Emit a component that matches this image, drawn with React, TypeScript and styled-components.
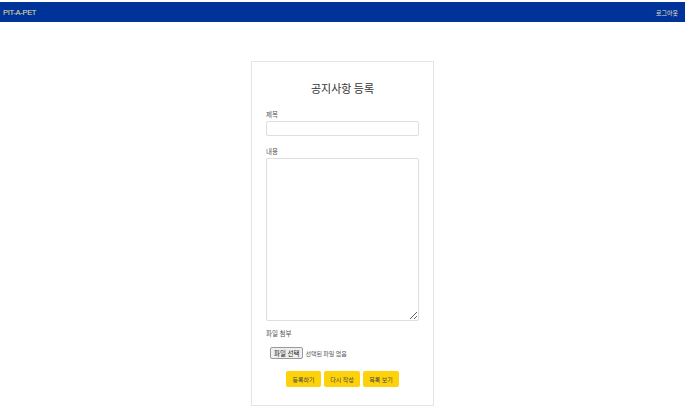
import React from "react";
import styled, { createGlobalStyle } from "styled-components";

const Global = createGlobalStyle`
  html, body { margin: 0; padding: 0; background: #fff; }
  body { font-family: "Noto Sans CJK KR", "Noto Sans", sans-serif; padding-top: 2px; }
  * { box-sizing: border-box; }
`;

const Header = styled.header`
  height: 20px;
  background: #003399;
  display: flex;
  align-items: center;
  justify-content: space-between;
  padding: 0 7px 0 3px;
`;

const Logo = styled.div`
  font-family: "Liberation Sans", Arial, sans-serif;
  font-size: 7.5px;
  color: #e8e29a;
  letter-spacing: -0.3px;
`;

const Logout = styled.a`
  font-size: 6px;
  color: #e6e3c0;
  text-decoration: none;
`;

const Main = styled.main`
  display: flex;
  justify-content: center;
  padding-top: 39px;
`;

const Card = styled.section`
  width: 183px;
  border: 1px solid #e4e4e4;
  padding: 14px 14px 18px;
  display: flex;
  flex-direction: column;
`;

const Title = styled.h1`
  margin: 0;
  text-align: center;
  font-weight: 400;
  font-size: 11px;
  color: #333;
  line-height: 16px;
  padding-top: 4px;
  margin-bottom: 13px;
`;

const Label = styled.label`
  font-size: 6.5px;
  color: #555;
  line-height: 10px;
  margin-bottom: 2px;
`;

const TextInput = styled.input`
  height: 15px;
  border: 1px solid #dedede;
  border-radius: 2px;
  margin: 0 0 10px;
  padding: 0 3px;
  outline: none;
`;

const TextArea = styled.textarea`
  height: 163px;
  border: 1px solid #dedede;
  border-radius: 2px;
  margin: 0 0 7px;
  padding: 3px;
  resize: vertical;
  outline: none;
`;

const FileRow = styled.div`
  display: flex;
  align-items: center;
  gap: 2px;
  padding-left: 4px;
  margin-top: 7px;
`;

const FileButton = styled.span`
  display: inline-flex;
  align-items: center;
  height: 12px;
  padding: 0 3px;
  border: 1px solid #999;
  border-radius: 2px;
  background: #efefef;
  font-size: 6.5px;
  color: #222;
`;

const FileText = styled.span`
  font-size: 6px;
  color: #555;
`;

const Buttons = styled.div`
  display: flex;
  justify-content: center;
  gap: 3px;
  margin-top: 12px;
`;

const Btn = styled.button<{ w: number }>`
  height: 16px;
  width: ${(p) => p.w}px;
  border: none;
  border-radius: 2px;
  background: #fdd20b;
  font-family: inherit;
  font-size: 6px;
  color: #444;
  padding: 0;
  cursor: pointer;
`;

export default function App() {
  return (
    <>
      <Global />
      <Header>
        <Logo>PIT-A-PET</Logo>
        <Logout href="#">로그아웃</Logout>
      </Header>
      <Main>
        <Card>
          <Title>공지사항 등록</Title>
          <Label>제목</Label>
          <TextInput />
          <Label>내용</Label>
          <TextArea />
          <Label>파일 첨부</Label>
          <FileRow>
            <FileButton>파일 선택</FileButton>
            <FileText>선택된 파일 없음</FileText>
          </FileRow>
          <Buttons>
            <Btn w={35}>등록하기</Btn>
            <Btn w={36}>다시 작성</Btn>
            <Btn w={36}>목록 보기</Btn>
          </Buttons>
        </Card>
      </Main>
    </>
  );
}
